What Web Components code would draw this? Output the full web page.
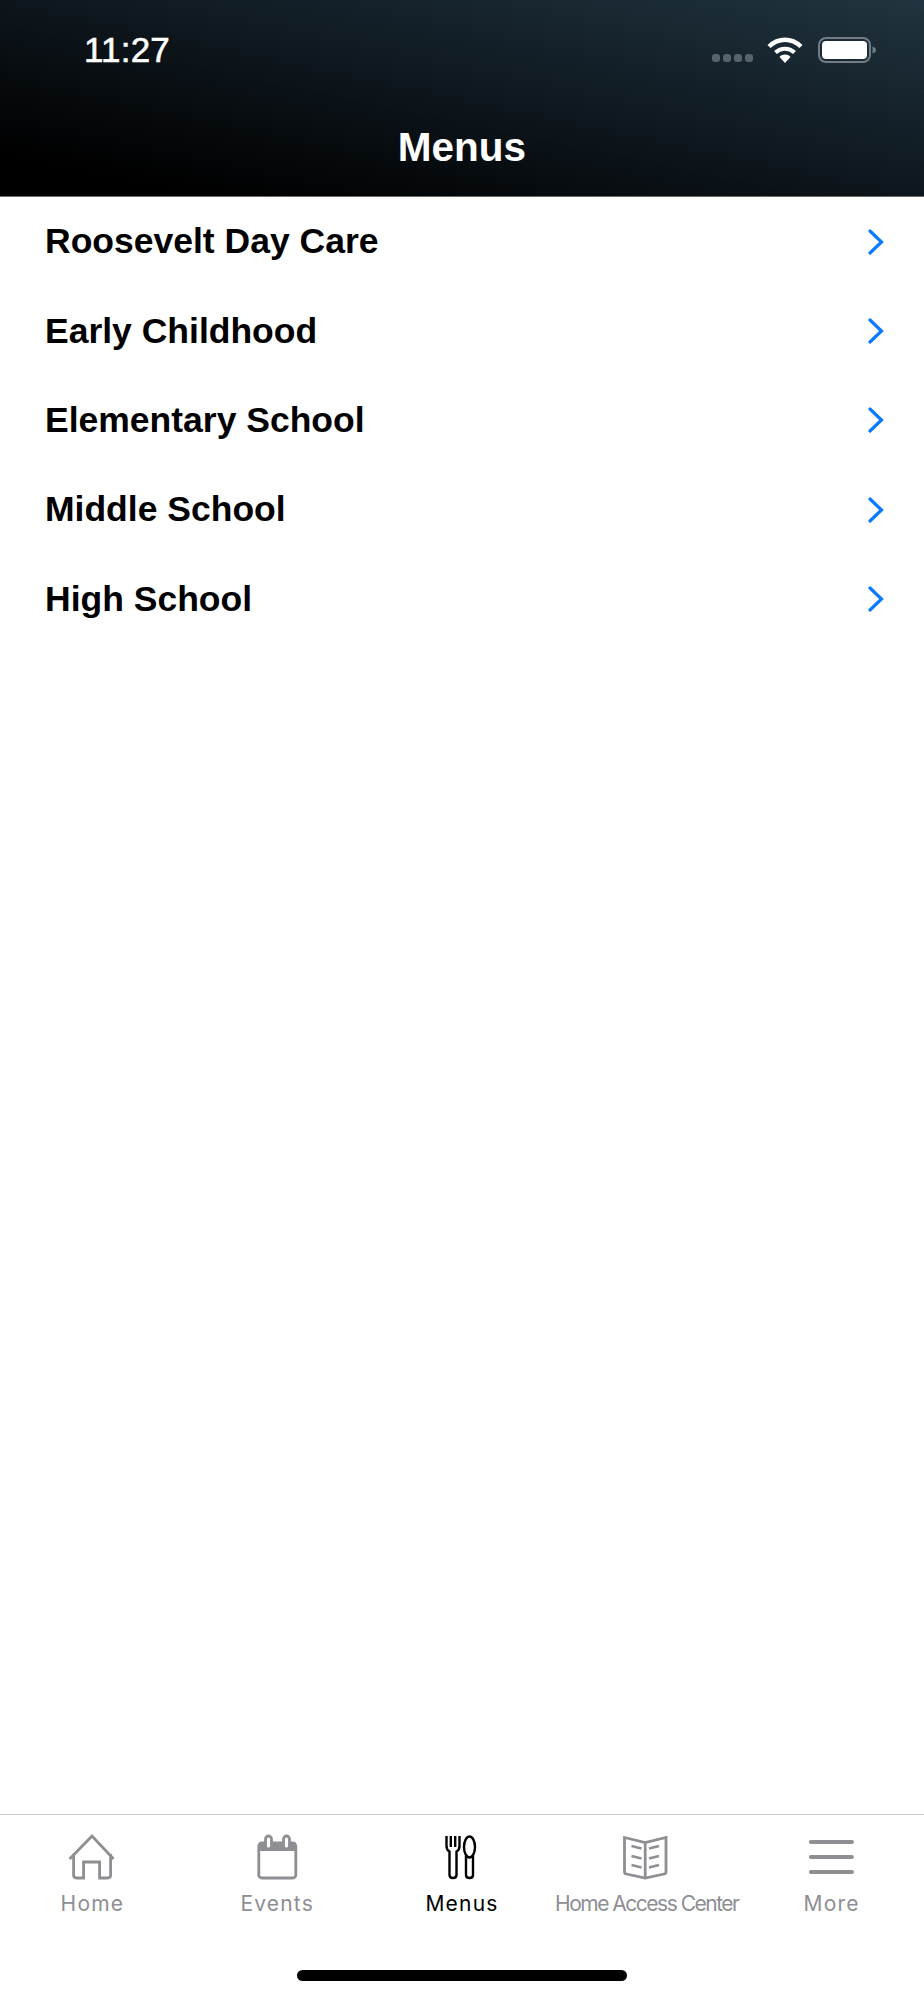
<!DOCTYPE html>
<html>
<head>
<meta charset="utf-8">
<title>Menus</title>
<style>
  html, body { margin: 0; padding: 0; background: #fff; }
</style>
</head>
<body>
<app-screen>
  <app-header slot="header" title="Menus" time="11:27"></app-header>
  <menu-row>Roosevelt Day Care</menu-row>
  <menu-row>Early Childhood</menu-row>
  <menu-row>Elementary School</menu-row>
  <menu-row>Middle School</menu-row>
  <menu-row>High School</menu-row>
  <tab-bar slot="footer"></tab-bar>
</app-screen>

<script>
class AppScreen extends HTMLElement {
  constructor() {
    super();
    this.attachShadow({ mode: 'open' });
    this.shadowRoot.innerHTML = `
      <style>
        :host {
          display: flex;
          flex-direction: column;
          width: 924px;
          height: 2000px;
          overflow: hidden;
          background: #fff;
        }
        .list { flex: 1; display: flex; flex-direction: column; }
      </style>
      <slot name="header"></slot>
      <div class="list"><slot></slot></div>
      <slot name="footer"></slot>
    `;
  }
}

class AppHeader extends HTMLElement {
  constructor() {
    super();
    this.attachShadow({ mode: 'open' });
  }

  connectedCallback() {
    const title = this.getAttribute('title') || '';
    const time = this.getAttribute('time') || '';
    this.shadowRoot.innerHTML = `
      <style>
        :host {
          display: flex;
          flex-direction: column;
          height: 197px;
          box-sizing: border-box;
          border-bottom: 1px solid #6b6b6b;
          background: linear-gradient(to top right, #000 12%, #111c24 60%, #21343f 100%);
          color: #fff;
          font-family: "Liberation Sans", Arial, sans-serif;
        }
        .status {
          display: flex;
          justify-content: space-between;
          align-items: center;
          height: 50px;
          margin-top: 25px;
          padding: 0 48px 0 84px;
        }
        .time { font-size: 35px; letter-spacing: 0.2px; -webkit-text-stroke: 0.6px #fff; line-height: 50px; }
        .right { display: flex; align-items: center; }
        .dots { display: flex; gap: 3px; margin: 15px 14px 0 0; }
        .dots i { width: 8px; height: 8px; border-radius: 3px; background: #56626c; }
        .right svg { display: block; }
        .battery { margin-left: 15px; }
        h1 {
          margin: 0;
          margin-top: 49px;
          font-size: 40.5px;
          line-height: 46px;
          font-weight: 700;
          text-align: center;
        }
      </style>
      <div class="status">
        <span class="time">${time}</span>
        <div class="right">
          <div class="dots"><i></i><i></i><i></i><i></i></div>
          <svg width="36" height="26" viewBox="0 0 36 26">
            <path d="M2 9.5C11.5 .5 24.5 .5 34 9.5" fill="none" stroke="#fff" stroke-width="4.4"/>
            <path d="M8.5 15.5C14 10.5 22 10.5 27.5 15.5" fill="none" stroke="#fff" stroke-width="4.2"/>
            <path d="M12.5 20C15.5 16.8 20.5 16.8 23.5 20L18 26Z" fill="#fff"/>
          </svg>
          <svg class="battery" width="58" height="26" viewBox="0 0 58 26">
            <rect x="1" y="1" width="51" height="24" rx="7" fill="none" stroke="#717c85" stroke-width="2"/>
            <rect x="4" y="4" width="45" height="18" rx="4" fill="#fff"/>
            <path d="M54.5 9.5C57 10.2 58 11.5 58 13S57 15.8 54.5 16.5Z" fill="#717c85"/>
          </svg>
        </div>
      </div>
      <h1>${title}</h1>
    `;
  }
}

class MenuRow extends HTMLElement {
  constructor() {
    super();
    this.attachShadow({ mode: 'open' });
    this.shadowRoot.innerHTML = `
      <style>
        :host {
          display: flex;
          align-items: center;
          justify-content: space-between;
          height: 89.4px;
          padding: 0 40px 0 45px;
          color: #000;
          font-family: "Liberation Sans", Arial, sans-serif;
          font-size: 35.5px;
          font-weight: 700;
        }
        svg { display: block; }
      </style>
      <span><slot></slot></span>
      <svg width="16" height="26" viewBox="0 0 16 26">
        <path d="M2 2L13.5 13L2 24" fill="none" stroke="#0a7aff" stroke-width="3.2" stroke-linecap="round" stroke-linejoin="miter"/>
      </svg>
    `;
  }
}

const TAB_ICONS = {
  home: `<path d="M1.6 26L24 3L45.6 26" stroke-linecap="butt"/>
         <path d="M5.6 21V42Q5.6 45 8.6 45H15.6V29H31.6V45H39.6Q42.6 45 42.6 42V21"/>`,
  events: `<rect x="5.8" y="10" width="37" height="35" rx="3"/>
           <rect x="5.8" y="9" width="37" height="9" rx="2" fill="currentColor" stroke="none"/>
           <rect x="12.5" y="3" width="6" height="13" rx="3" fill="#fff"/>
           <rect x="30.5" y="3" width="6" height="13" rx="3" fill="#fff"/>`,
  menus: `<path d="M8.5 3V13Q8.5 17 11.5 18.5V42Q11.5 45 15 45Q18.5 45 18.5 42V18.5Q21.5 17 21.5 13V3"/>
          <path d="M12.8 3V14M17.2 3V14"/>
          <ellipse cx="31.5" cy="14" rx="5.5" ry="10.5"/>
          <path d="M28 23V42Q28 45 31.5 45Q35 45 35 42V23"/>`,
  book: `<path d="M1.5 4.5L22.2 9.5L43 4.5V39Q43 40.6 41 41L22.2 45L3.5 41Q1.5 40.6 1.5 39Z"/>
         <path d="M22.2 9.5V45"/>
         <path d="M8.5 13L18.5 15.5M8.5 23L18.5 25.5M8.5 32L18.5 34.5M36 13L26 15.5M36 23L26 25.5M36 32L26 34.5"/>`,
  more: `<path d="M2.9 9H43.9M2.9 24H43.9M2.9 39H43.9" stroke-width="4" stroke-linecap="round"/>`
};

class TabItem extends HTMLElement {
  constructor() {
    super();
    this.attachShadow({ mode: 'open' });
  }

  connectedCallback() {
    const icon = TAB_ICONS[this.getAttribute('icon')] || '';
    const active = this.hasAttribute('active');
    const spacing = this.getAttribute('spacing') || '1.2px';
    this.shadowRoot.innerHTML = `
      <style>
        :host {
          display: flex;
          flex-direction: column;
          align-items: center;
          flex: 1 1 0;
          min-width: 0;
          color: ${active ? '#000' : '#8e8e93'};
          font-family: Inter, "Liberation Sans", sans-serif;
          font-size: 21px;
          font-weight: 400;
        }
        svg { display: block; fill: none; stroke: currentColor; stroke-width: ${active ? 2.4 : 2.8}; }
        span {
          margin-top: 9px;
          line-height: 28px;
          white-space: nowrap;
          letter-spacing: ${spacing};
        }
      </style>
      <svg width="48" height="48" viewBox="0 0 48 48">${icon}</svg>
      <span><slot></slot></span>
    `;
  }
}

class TabBar extends HTMLElement {
  constructor() {
    super();
    this.attachShadow({ mode: 'open' });
    this.shadowRoot.innerHTML = `
      <style>
        :host {
          display: flex;
          flex-direction: column;
          box-sizing: border-box;
          height: 186px;
          border-top: 1px solid #c8c8c8;
          background: #fff;
        }
        .tabs { display: flex; padding-top: 18px; }
        .indicator {
          width: 330px;
          height: 11px;
          margin: 52px auto 0;
          border-radius: 6px;
          background: #000;
        }
      </style>
      <div class="tabs">
        <tab-item icon="home">Home</tab-item>
        <tab-item icon="events">Events</tab-item>
        <tab-item icon="menus" active>Menus</tab-item>
        <tab-item icon="book" spacing="-1.5px">Home Access Center</tab-item>
        <tab-item icon="more">More</tab-item>
      </div>
      <div class="indicator"></div>
    `;
  }
}

customElements.define('tab-item', TabItem);
customElements.define('tab-bar', TabBar);
customElements.define('menu-row', MenuRow);
customElements.define('app-header', AppHeader);
customElements.define('app-screen', AppScreen);
</script>
</body>
</html>
